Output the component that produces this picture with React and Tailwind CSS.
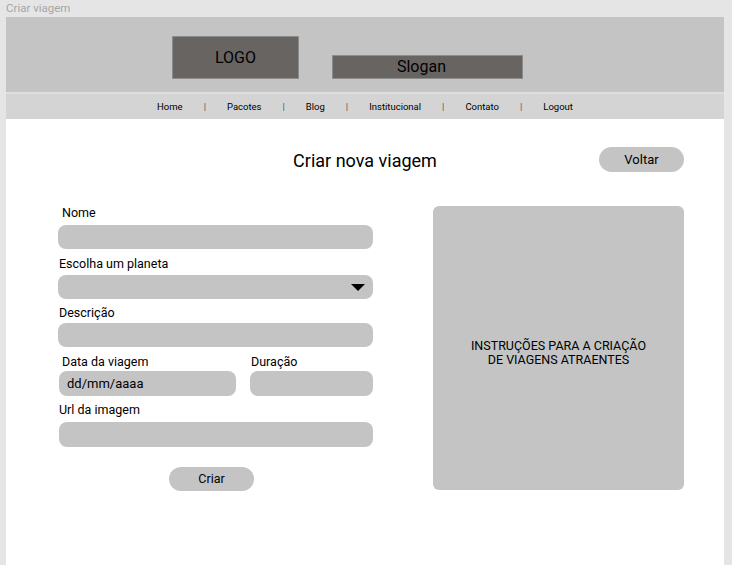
import React from "react";

const navItems = ["Home", "Pacotes", "Blog", "Institucional", "Contato", "Logout"];

export default function App() {
  return (
    <div className="w-[732px] h-[565px] overflow-hidden bg-[#e5e5e5] text-black" style={{ fontFamily: "Roboto, 'Liberation Sans', sans-serif" }}>
      <div className="h-[17px] pl-[6px] text-[11.5px] leading-[17px] text-[#a6a6a6]">Criar viagem</div>
      <div className="ml-[6px] w-[718px] h-[548px] bg-white flex flex-col">
        {/* header */}
        <div className="h-[75px] bg-[#c4c4c4] flex items-end pl-[166px] pb-[13px] gap-[33px]">
          <div className="w-[127px] h-[43px] bg-[#686462] border border-[#8c8c8c] flex items-center justify-center text-[16px] -mt-[1px]">LOGO</div>
          <div className="w-[191px] h-[24px] bg-[#686462] border border-[#8c8c8c] flex items-center justify-center text-[16px] pr-[12px]">Slogan</div>
        </div>
        <div className="h-[2px] bg-[#dedede]" />
        <div className="h-[25px] bg-[#d4d4d4] flex items-center justify-center gap-[21px] text-[9.5px] pt-[1px]">
          {navItems.map((item, i) => (
            <React.Fragment key={item}>
              {i > 0 && <span className="text-[#555]">|</span>}
              <span>{item}</span>
            </React.Fragment>
          ))}
        </div>
        {/* main */}
        <div className="flex-1 flex flex-col">
          <div className="mt-[27px] h-[25px] grid grid-cols-[1fr_auto_1fr] items-center">
            <div />
            <div className="text-[18px] leading-[25px] mt-[2px]">Criar nova viagem</div>
            <div className="flex justify-end pr-[40px]">
              <button className="w-[85px] h-[25px] rounded-full bg-[#c4c4c4] text-[13px] leading-[25px]">Voltar</button>
            </div>
          </div>
          <div className="mt-[34px] flex pl-[52px] gap-[60px]">
            <div className="w-[315px] flex flex-col text-[12.5px]">
              <div className="h-[16px] leading-[16px] pl-[4px]">Nome</div>
              <div className="mt-[4px] h-[24px] rounded-[8px] bg-[#c4c4c4]" />
              <div className="mt-[7px] h-[16px] leading-[16px] pl-[1px]">Escolha um planeta</div>
              <div className="mt-[3px] h-[24px] rounded-[8px] bg-[#c4c4c4] flex items-center justify-end pr-[8px]">
                <svg width="14" height="7" viewBox="0 0 14 7"><polygon points="0,0 14,0 7,7" fill="#000" /></svg>
              </div>
              <div className="mt-[6px] h-[16px] leading-[16px] pl-[1px]">Descrição</div>
              <div className="mt-[2px] h-[24px] rounded-[8px] bg-[#c4c4c4]" />
              <div className="mt-[7px] flex gap-[14px] pl-[1px]">
                <div className="w-[177px] flex flex-col">
                  <div className="h-[16px] leading-[16px] pl-[3px]">Data da viagem</div>
                  <div className="mt-[1px] h-[25px] rounded-[8px] bg-[#c4c4c4] flex items-center pl-[8px] text-[13px]">dd/mm/aaaa</div>
                </div>
                <div className="flex-1 flex flex-col">
                  <div className="h-[16px] leading-[16px] pl-[1px]">Duração</div>
                  <div className="mt-[1px] h-[25px] rounded-[8px] bg-[#c4c4c4]" />
                </div>
              </div>
              <div className="mt-[6px] h-[16px] leading-[16px] pl-[1px]">Url da imagem</div>
              <div className="mt-[4px] ml-[1px] h-[25px] rounded-[8px] bg-[#c4c4c4]" />
              <button className="mt-[20px] ml-[111px] w-[85px] h-[24px] rounded-full bg-[#c4c4c4] text-[12.5px] leading-[24px]">Criar</button>
            </div>
            <div className="mt-[1px] w-[251px] h-[284px] rounded-[6px] bg-[#c4c4c4] pt-[133px] text-center text-[12.5px] leading-[14px]">
              INSTRUÇÕES PARA A CRIAÇÃO
              <br />
              DE VIAGENS ATRAENTES
            </div>
          </div>
        </div>
      </div>
    </div>
  );
}
